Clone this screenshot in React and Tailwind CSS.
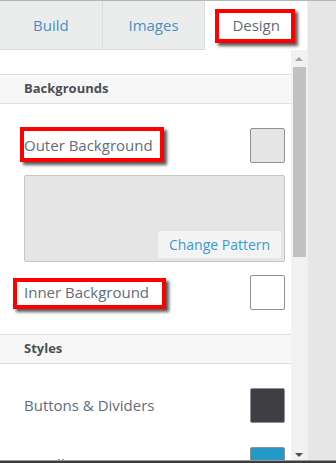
import React from "react";

const font = { fontFamily: '"Open Sans", "Liberation Sans", sans-serif' };

function Tab({ label, active }) {
  return (
    <div
      className={
        "flex-1 flex items-center justify-center text-[15px] " +
        (active
          ? "bg-white text-[#5f6c7b]"
          : "bg-[#ebeded] text-[#4a8fc0] border-r border-[#dcdede] border-b border-b-[#dcdcdc]")
      }
    >
      {label}
    </div>
  );
}

function SectionHeader({ title }) {
  return (
    <div className="h-[30px] border-y border-[#e0e0e0] bg-[#f7f7f7] flex items-center pl-6 text-[13px] font-bold text-[#4b4f56]">
      {title}
    </div>
  );
}

function Swatch({ color }) {
  return (
    <div
      className={"w-[35px] h-[35px] rounded-[2px] border border-[#8a929d] " + color}
    />
  );
}

function Row({ label, color, className = "" }) {
  return (
    <div className={"flex items-center justify-between pl-6 pr-[6px] " + className}>
      <span className="text-[15px] text-[#5f6c7b]">{label}</span>
      <Swatch color={color} />
    </div>
  );
}

// red annotation box drawn over the screenshot
function Mark({ className }) {
  return (
    <div
      className={
        "absolute border-[4px] border-[#ff0000] shadow-[3px_3px_3px_rgba(0,0,0,0.65)] " + className
      }
    />
  );
}

export default function App() {
  return (
    <div className="relative w-[336px] h-[463px] overflow-hidden bg-[#e6e6e6]" style={font}>
      <div className="h-px bg-[#b5b5b5]" />
      <div className="flex h-[462px]">
        <div className="w-[307px] flex flex-col bg-white">
          {/* TABS */}
          <div className="flex h-[49px]">
            <Tab label="Build" />
            <Tab label="Images" />
            <Tab label="Design" active />
          </div>

          <div className="flex flex-1 overflow-hidden">
            {/* PANEL CONTENT */}
            <div className="w-[291px] pt-6">
              <SectionHeader title="Backgrounds" />
              <Row label="Outer Background" color="bg-[#e5e5e5]" className="mt-6" />
              <div className="ml-6 mr-[6px] mt-3 h-[87px] rounded-[2px] border border-[#c4c4c4] bg-[#e5e5e5] flex items-end justify-end p-[3px]">
                <div className="w-[123px] h-[27px] rounded-[2px] bg-[#f3f4f5] flex items-center justify-center text-[14px] text-[#3a99d4]">
                  Change Pattern
                </div>
              </div>
              <Row label="Inner Background" color="bg-white" className="mt-[13px]" />
              <div className="mt-6">
                <SectionHeader title="Styles" />
              </div>
              <Row label="Buttons & Dividers" color="bg-[#3f3f43]" className="mt-6" />
              <Row label="Headlines" color="bg-[#2499c7]" className="mt-[24px]" />
            </div>

            {/* SCROLLBAR */}
            <div className="w-[16px] bg-[#f1f1f1] flex flex-col items-center">
              <div className="h-[17px] flex items-center justify-center">
                <div className="w-0 h-0 border-x-[4px] border-x-transparent border-b-[4px] border-b-[#a3a3a3]" />
              </div>
              <div className="w-[13px] h-[190px] bg-[#c1c1c1]" />
              <div className="flex-1" />
              <div className="h-[16px] flex items-center justify-center">
                <div className="w-0 h-0 border-x-[4px] border-x-transparent border-t-[4px] border-t-[#505050]" />
              </div>
            </div>
          </div>
        </div>
        <div className="w-px bg-[#f0f0f0]" />
        <div className="flex-1" />
      </div>

      {/* bottom window edge */}
      <div className="absolute left-0 right-0 bottom-0 h-[3px] bg-[#3c3c3c] border-t border-[#9a9a9a]" />

      <Mark className="left-[215px] top-[9px] w-[80px] h-[34px]" />
      <Mark className="left-[20px] top-[127px] w-[144px] h-[35px]" />
      <Mark className="left-[13px] top-[278px] w-[153px] h-[31px]" />
    </div>
  );
}
